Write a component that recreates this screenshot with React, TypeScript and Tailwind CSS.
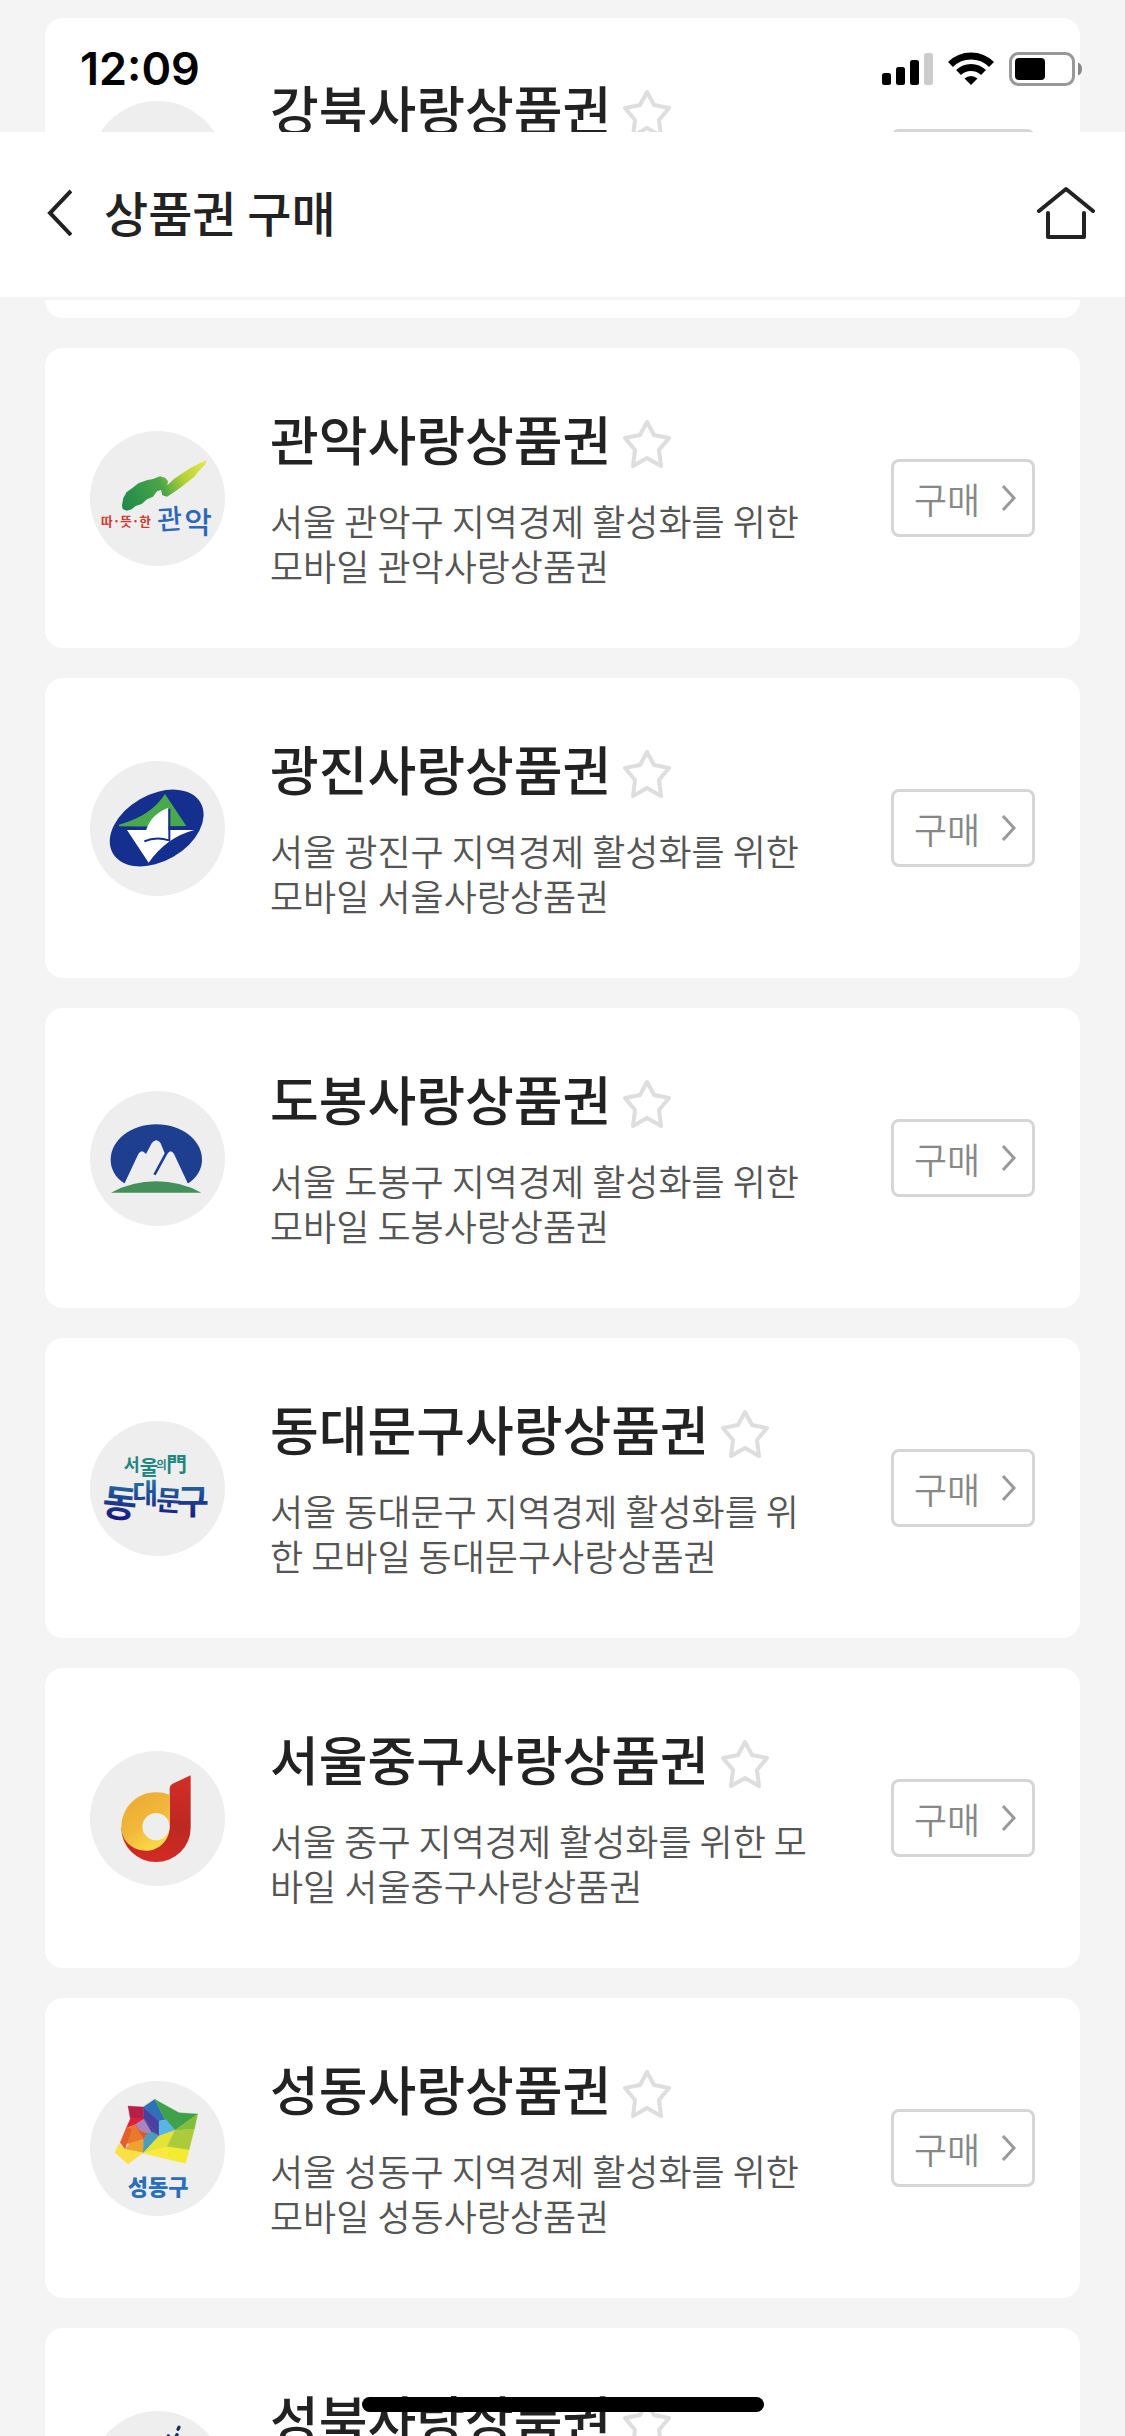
import React, { useState } from 'react';

const FONT = "font-['Noto_Sans_CJK_KR','Noto_Sans',sans-serif]";

// Emblems share one canvas; the grey disc has its centre at 235,235
const Emblem = ({ label, children }: { label: string, children?: React.ReactNode }) => (
  <svg viewBox="33 33 405 405" role="img" aria-label={label} className="size-[135px] shrink-0 overflow-hidden rounded-full bg-[#eeeeee]">
    {children}
  </svg>
);

const Gwanak = () => (
  <Emblem label="관악구">
    <defs>
      <linearGradient id="gwanak" x1="130" y1="250" x2="384" y2="125" gradientUnits="userSpaceOnUse">
        <stop offset="0" stopColor="#1f8a4c" />
        <stop offset="0.45" stopColor="#4aa548" />
        <stop offset="0.7" stopColor="#b5d236" />
        <stop offset="1" stopColor="#e6e84a" />
      </linearGradient>
    </defs>
    <path fill="url(#gwanak)" d="M129 256 L133 234 L143 216 L160 204 L178 190 L203 181 L222 177 L243 169 L258 173 L267 183 L265 196 L284 178 L310 160 L336 143 L362 130 L384 120 L378 134 L360 152 L346 170 L326 186 L306 202 L286 216 L264 230 L250 226 L246 210 L234 214 L222 230 L204 238 L188 252 L170 258 L158 268 L143 272 L131 267 Z" />
    <text x="66" y="317" fontSize="38" fontWeight="700" fill="#d2382c">따·뜻·한</text>
    <g fill="#2d68b8" fontWeight="500">
      <text x="236" y="330" fontSize="82" transform="rotate(-4 236 330)">관</text>
      <text x="316" y="340" fontSize="90">악</text>
    </g>
  </Emblem>
);

const Gwangjin = () => (
  <Emblem label="광진구">
    <ellipse cx="233" cy="234" rx="152" ry="100" transform="rotate(-30 233 234)" fill="#152f8f" />
    <path fill="#4aa94c" d="M120 224 Q216 198 258 132 L322 228 Q220 230 120 229 Z" />
    <path fill="#fff" d="M144 240 H346 Q262 262 209 338 Z" />
    <path fill="#fff" d="M196 262 Q206 196 268 173 V264 Q232 258 196 268 Z" />
    <path fill="none" stroke="#152f8f" strokeWidth="6" d="M196 274 Q230 258 271 271 V176" />
  </Emblem>
);

const Dobong = () => (
  <Emblem label="도봉구">
    <path fill="#1e3f8f" d="M136 310 C108 292 95 266 95 239 C95 180 157 133 232 133 C307 133 369 180 369 239 C369 267 354 292 328 310 Z" />
    <path fill="#eee" d="M134 316 L178 222 Q188 206 201 222 L218 190 Q232 172 245 190 L257 220 L223 283 L230 286 L265 222 Q275 206 285 222 L329 316 Z" />
    <path fill="#44905a" d="M96 338 Q160 304 231 304 Q304 304 367 338 Z" />
  </Emblem>
);

const Dongdaemun = () => (
  <Emblem label="동대문구">
    <defs>
      <linearGradient id="ddm" x1="0" y1="190" x2="0" y2="335" gradientUnits="userSpaceOnUse">
        <stop offset="0" stopColor="#2788a6" />
        <stop offset="0.5" stopColor="#1c4694" />
        <stop offset="1" stopColor="#1b137f" />
      </linearGradient>
    </defs>
    <g fill="#21877f" fontWeight="700">
      <text x="134" y="184" fontSize="52">서</text>
      <text x="182" y="194" fontSize="60">울</text>
      <text x="232" y="178" fontSize="34">의</text>
      <text x="262" y="186" fontSize="62">門</text>
    </g>
    <g fill="url(#ddm)" fontWeight="700">
      <text x="72" y="320" fontSize="112" transform="rotate(6 120 270)">동</text>
      <text x="160" y="282" fontSize="84">대</text>
      <text x="232" y="302" fontSize="84" transform="rotate(4 270 270)">문</text>
      <text x="294" y="312" fontSize="104">구</text>
    </g>
  </Emblem>
);

const Junggu = () => (
  <Emblem label="중구">
    <defs>
      <linearGradient id="jungRed" x1="0" y1="106" x2="0" y2="366" gradientUnits="userSpaceOnUse">
        <stop offset="0" stopColor="#d42e27" />
        <stop offset="0.6" stopColor="#bd2822" />
        <stop offset="1" stopColor="#d32a25" />
      </linearGradient>
      <linearGradient id="jungGold" x1="140" y1="180" x2="240" y2="330" gradientUnits="userSpaceOnUse">
        <stop offset="0" stopColor="#edab35" />
        <stop offset="0.5" stopColor="#f1b83a" />
        <stop offset="1" stopColor="#fddf4a" />
      </linearGradient>
    </defs>
    <path fill="url(#jungRed)" d="M335 106 V264 A104 102 0 0 1 127 264 L272 250 V146 Q272 136 281 131 Z" />
    <path fill="url(#jungGold)" d="M272 164 V260 C272 300 240 332 202 332 C160 332 127 303 127 261 C127 204 173 157 230 157 Q253 157 272 164 Z" />
    <path fill="#eee" d="M272 260 A41 41 0 1 1 271 251 Z" />
  </Emblem>
);

const FACETS = [
  ['147,108 193,111 195,147 154,146', '#b81f46'],
  ['154,146 195,147 168,164 142,174', '#df1f35'],
  ['193,111 227,88 258,149 240,153', '#2f70bb'],
  ['193,111 240,153 240,198 195,147', '#4841a0'],
  ['227,88 300,128 356,132 288,181 258,149', '#3fa14a'],
  ['356,132 346,178 288,181', '#83be3b'],
  ['240,153 262,149 288,181 240,198', '#57b6e3'],
  ['168,164 195,147 226,186 205,190 185,184', '#a985c0'],
  ['195,147 240,198 218,186', '#4841a0'],
  ['142,174 168,164 194,208 152,221 124,218', '#e9792d'],
  ['142,174 158,178 138,238 124,218', '#e65f2b'],
  ['138,238 152,220 194,208 192,248', '#f0a22f'],
  ['168,164 185,184 205,190 194,208', '#e0552e'],
  ['205,190 220,186 240,198 192,250 194,208', '#4a9dbb'],
  ['240,198 288,181 264,230 192,250', '#e6e337'],
  ['288,181 346,178 330,240 264,230', '#abca3c'],
  ['264,230 330,240 320,280 268,268', '#f4ea30'],
  ['192,250 264,230 268,268', '#fbe93c'],
  ['119,222 138,238 192,248 147,282 108,248', '#fae044'],
];

const Seongdong = () => (
  <Emblem label="성동구">
    {FACETS.map(([points, fill]) => (
      <polygon key={points} points={points} fill={fill} stroke={fill} strokeWidth="1" />
    ))}
    <text x="146" y="375" fontSize="66" fontWeight="900" fill="#2a6fbd">성동구</text>
  </Emblem>
);

const Seongbuk = () => (
  <Emblem label="성북구">
    <g fill="none" stroke="#1c2c5e" strokeWidth="10" strokeLinecap="round">
      <path d="M300 82 L297 88" />
      <path d="M294 104 L284 128" />
      <path d="M268 108 L264 128" />
    </g>
  </Emblem>
);

const Star = ({ on }: { on: boolean }) => (
  <svg viewBox="0 0 48 48" className="size-12" fill={on ? '#ffd24a' : 'none'} stroke="#dedede" strokeWidth="4" strokeLinejoin="round">
    <path d="M24 2 L31 15 L46 18 L36 30 L38 46 L24 38 L10 46 L12 30 L2 18 L17 15 Z" />
  </svg>
);

type Voucher = { name: string, desc: string, logo: React.ReactNode };

const VOUCHERS: Voucher[] = [
  { name: '강북사랑상품권', desc: '서울 강북구 지역경제 활성화를 위한 모바일 강북사랑상품권', logo: <Emblem label="강북구" /> },
  { name: '관악사랑상품권', desc: '서울 관악구 지역경제 활성화를 위한 모바일 관악사랑상품권', logo: <Gwanak /> },
  { name: '광진사랑상품권', desc: '서울 광진구 지역경제 활성화를 위한 모바일 서울사랑상품권', logo: <Gwangjin /> },
  { name: '도봉사랑상품권', desc: '서울 도봉구 지역경제 활성화를 위한 모바일 도봉사랑상품권', logo: <Dobong /> },
  { name: '동대문구사랑상품권', desc: '서울 동대문구 지역경제 활성화를 위한 모바일 동대문구사랑상품권', logo: <Dongdaemun /> },
  { name: '서울중구사랑상품권', desc: '서울 중구 지역경제 활성화를 위한 모바일 서울중구사랑상품권', logo: <Junggu /> },
  { name: '성동사랑상품권', desc: '서울 성동구 지역경제 활성화를 위한 모바일 성동사랑상품권', logo: <Seongdong /> },
  { name: '성북사랑상품권', desc: '서울 성북구 지역경제 활성화를 위한 모바일 성북사랑상품권', logo: <Seongbuk /> },
];

const VoucherCard = ({ name, desc, logo }: Voucher) => {
  const [fav, setFav] = useState(false);

  return (
    <li className="flex shrink-0 items-center rounded-[18px] bg-white px-[45px] py-[60px]">
      {logo}
      <div className="ml-[45px] min-w-0 flex-1">
        <div className="flex items-end gap-3">
          <h2 className="text-[53px] leading-[60px] font-medium text-[#222222]">{name}</h2>
          <button type="button" aria-label={`${name} 즐겨찾기`} aria-pressed={fav} onClick={() => setFav(!fav)}>
            <Star on={fav} />
          </button>
        </div>
        <p className="mt-[30px] text-[36px] leading-[45px] font-[350] text-[#555555]">{desc}</p>
      </div>
      <button type="button" className="ml-[75px] flex h-[78px] w-36 shrink-0 items-center justify-between rounded-lg border-3 border-[#d6d6d6] pr-[15px] pl-5 text-[36px] leading-[45px] font-[350] text-[#888888]">
        구매
        <svg viewBox="0 0 16 26" className="h-[26px] w-4" fill="none" stroke="#999999" strokeWidth="3">
          <path d="M2 1 L13 13 L2 25" />
        </svg>
      </button>
    </li>
  );
};

const StatusBar = () => (
  <div className="flex h-[132px] items-center justify-between pt-[6px] pr-[43px] pl-20">
    <span className="font-['Inter',sans-serif] text-[45px] leading-[54px] font-semibold text-black">12:09</span>
    <svg viewBox="882 52 200 34" className="h-[34px] w-[200px]" role="img" aria-label="신호, 와이파이, 배터리">
      <rect x="882" y="73" width="9" height="12" rx="2.5" />
      <rect x="896" y="67" width="9" height="18" rx="2.5" />
      <rect x="910" y="60" width="9" height="25" rx="2.5" />
      <rect x="924" y="53" width="9" height="32" rx="2.5" fill="#cccccc" />
      {/* wifi */}
      <g fill="none" stroke="#000" strokeWidth="7">
        <path d="M950.5 64.5 A29 29 0 0 1 991.5 64.5" />
        <path d="M958.5 72.5 A18 18 0 0 1 983.5 72.5" />
      </g>
      <path d="M971 85 L964.5 78.5 A9.5 9.5 0 0 1 977.5 78.5 Z" />
      {/* battery */}
      <rect x="1010.5" y="53.5" width="63" height="31" rx="8" fill="none" stroke="#999999" strokeWidth="3" />
      <rect x="1015" y="58" width="30" height="22" rx="4" />
      <path d="M1078 62.5 Q1082 64 1082 69 Q1082 74 1078 75.5 Z" fill="#888888" />
    </svg>
  </div>
);

export default function App() {
  return (
    <div className={`relative h-screen overflow-hidden bg-[#f4f4f4] ${FONT}`}>
      <main className="h-full overflow-hidden px-[45px] pt-[18px]">
        <ul className="flex flex-col gap-[30px]">
          {VOUCHERS.map((v) => (
            <VoucherCard key={v.name} {...v} />
          ))}
        </ul>
      </main>

      <header className="absolute inset-x-0 top-0">
        <StatusBar />
        <div className="flex h-[168px] items-center border-b-3 border-[#f4f4f4] bg-white pr-[30px] pb-2 pl-[46px]">
          <button type="button" aria-label="뒤로">
            <svg viewBox="0 0 26 50" className="h-[50px] w-[26px]" fill="none" stroke="#222222" strokeWidth="4">
              <path d="M25 5 L4 27 L25 49" />
            </svg>
          </button>
          <h1 className="ml-8 flex-1 text-[48px] leading-[60px] font-medium text-[#222222]">상품권 구매</h1>
          <button type="button" aria-label="홈">
            <svg viewBox="0 0 60 56" className="h-14 w-[60px]" fill="none" stroke="#222222" strokeWidth="4" strokeLinecap="round" strokeLinejoin="round">
              <path d="M4 28 L31 6 L58 28" />
              <path d="M13 30 V54 H49 V30" />
            </svg>
          </button>
        </div>
      </header>

      {/* Home indicator */}
      <div className="absolute bottom-6 left-1/2 h-[15px] w-[402px] -translate-x-1/2 rounded-full bg-black" />
    </div>
  );
}
